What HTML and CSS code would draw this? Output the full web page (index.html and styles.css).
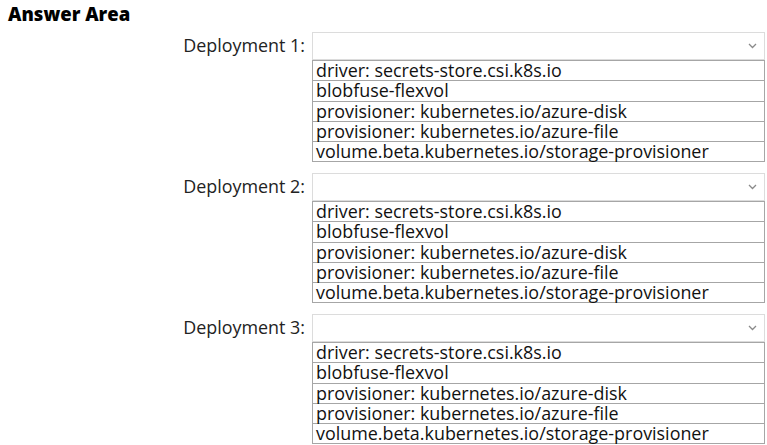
FILE: index.html
```html
<!DOCTYPE html>
<html lang="en">
<head>
    <meta charset="UTF-8">
    <title>Answer Area</title>
    <link rel="stylesheet" href="styles.css">
</head>
<body>
    <h1 class="title">Answer Area</h1>

    <div class="answer">
        <div class="answer-label">Deployment 1:</div>
        <div class="answer-field">
            <div class="dropdown">
                <svg class="chevron" width="9" height="6" viewBox="0 0 9 6"><path d="M1 1l3.5 3.5L8 1" fill="none" stroke="#8a8a8a" stroke-width="1.3"/></svg>
            </div>
            <ul class="options">
                <li>driver: secrets-store.csi.k8s.io</li>
                <li>blobfuse-flexvol</li>
                <li>provisioner: kubernetes.io/azure-disk</li>
                <li>provisioner: kubernetes.io/azure-file</li>
                <li>volume.beta.kubernetes.io/storage-provisioner</li>
            </ul>
        </div>
    </div>

    <div class="answer">
        <div class="answer-label">Deployment 2:</div>
        <div class="answer-field">
            <div class="dropdown">
                <svg class="chevron" width="9" height="6" viewBox="0 0 9 6"><path d="M1 1l3.5 3.5L8 1" fill="none" stroke="#8a8a8a" stroke-width="1.3"/></svg>
            </div>
            <ul class="options">
                <li>driver: secrets-store.csi.k8s.io</li>
                <li>blobfuse-flexvol</li>
                <li>provisioner: kubernetes.io/azure-disk</li>
                <li>provisioner: kubernetes.io/azure-file</li>
                <li>volume.beta.kubernetes.io/storage-provisioner</li>
            </ul>
        </div>
    </div>

    <div class="answer">
        <div class="answer-label">Deployment 3:</div>
        <div class="answer-field">
            <div class="dropdown">
                <svg class="chevron" width="9" height="6" viewBox="0 0 9 6"><path d="M1 1l3.5 3.5L8 1" fill="none" stroke="#8a8a8a" stroke-width="1.3"/></svg>
            </div>
            <ul class="options">
                <li>driver: secrets-store.csi.k8s.io</li>
                <li>blobfuse-flexvol</li>
                <li>provisioner: kubernetes.io/azure-disk</li>
                <li>provisioner: kubernetes.io/azure-file</li>
                <li>volume.beta.kubernetes.io/storage-provisioner</li>
            </ul>
        </div>
    </div>
</body>
</html>
```

FILE: styles.css
```css
/* Answer area layout */
body {
    font-family: "Open Sans", "Noto Sans", sans-serif;
    background-color: #fff;
    color: #1a1a1a;
    margin: 0;
    padding: 0 2px 0 8px;
}

.title {
    font-size: 18.5px;
    font-weight: 800;
    color: #000;
    margin: 0;
    height: 32px;
    line-height: 27px;
}

.answer {
    display: flex;
    margin-bottom: 10.5px;
}

.answer-label {
    width: 297px;
    height: 28px;
    padding-right: 7px;
    text-align: right;
    font-size: 17.9px;
    line-height: 27px;
    color: #222;
}

.answer-field {
    flex: 1;
}

.dropdown {
    height: 26px;
    border: 1px solid #dcdcdc;
    display: flex;
    align-items: center;
    justify-content: flex-end;
    padding-right: 7px;
}

.options {
    list-style: none;
    margin: 0;
    padding: 0;
    border: 1px solid #a6a6a6;
    border-top: none;
}

.options li {
    height: 19.3px;
    line-height: 19px;
    font-size: 17.9px;
    padding-left: 3px;
    border-top: 1px solid #a6a6a6;
    color: #111;
    white-space: nowrap;
}
```
